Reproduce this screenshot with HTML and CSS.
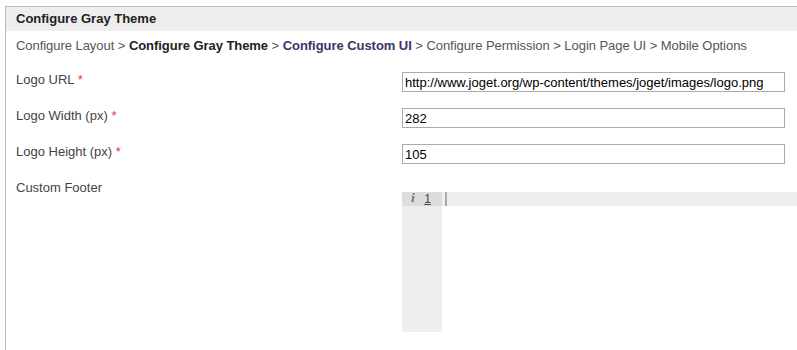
FILE: index.html
```html
<!DOCTYPE html>
<html lang="en">
<head>
  <meta charset="UTF-8">
  <title>Configure Gray Theme</title>
  <link rel="stylesheet" href="styles.css">
</head>
<body>
  <div class="panel">
    <div class="panel-title">Configure Gray Theme</div>

    <div class="steps">
      Configure Layout &gt; <span class="current">Configure Gray Theme</span> &gt;
      <span class="next">Configure Custom UI</span> &gt; Configure Permission &gt;
      Login Page UI &gt; Mobile Options
    </div>

    <div class="row">
      <label for="logoUrl">Logo URL <span class="req">*</span></label>
      <input type="text" id="logoUrl" value="http://www.joget.org/wp-content/themes/joget/images/logo.png">
    </div>

    <div class="row">
      <label for="logoWidth">Logo Width (px) <span class="req">*</span></label>
      <input type="text" id="logoWidth" value="282">
    </div>

    <div class="row">
      <label for="logoHeight">Logo Height (px) <span class="req">*</span></label>
      <input type="text" id="logoHeight" value="105">
    </div>

    <div class="row">
      <label>Custom Footer</label>
      <div class="editor">
        <div class="gutter">
          <div class="gutter-line"><span class="info">i</span><span class="num">1</span></div>
        </div>
        <div class="code">
          <div class="code-line"><span class="cursor"></span></div>
        </div>
      </div>
    </div>
  </div>
</body>
</html>
```

FILE: styles.css
```css
body {
  margin: 0;
  font-family: "Liberation Sans", Arial, sans-serif;
  font-size: 13px;
  color: #333;
  background: #fff;
  overflow: hidden;
}
.panel {
  margin: 6px 0 0 5px;
  border-top: 1px solid #bbb;
  border-left: 1px solid #bbb;
  height: 343px;
  overflow: hidden;
}
.panel-title {
  background: #eee;
  height: 24px;
  line-height: 24px;
  padding-left: 10px;
  font-weight: bold;
  color: #222;
}
.steps {
  padding: 7px 10px 0;
  line-height: 15px;
  color: #555;
  white-space: nowrap;
  letter-spacing: -0.05px;
}
.steps .current {
  font-weight: bold;
  color: #222;
}
.steps .next {
  font-weight: bold;
  color: #3b3466;
}
.row {
  display: flex;
  padding-left: 10px;
  margin-top: 17px;
}
.row + .row {
  margin-top: 14px;
}
.row label {
  width: 386px;
  flex: none;
  line-height: 15px;
  padding-top: 2px;
  color: #444;
}
.req {
  color: #e33;
}
.row input {
  width: 383px;
  height: 20px;
  box-sizing: border-box;
  border: 1px solid #aaa;
  padding: 0 2px;
  font-family: "Liberation Sans", Arial, sans-serif;
  font-size: 13px;
  color: #000;
  margin: 2px 0 0;
}
.editor {
  display: flex;
  width: 395px;
  height: 140px;
  margin-top: 14px;
  flex: none;
}
.gutter {
  width: 40px;
  background: #eee;
  flex: none;
}
.gutter-line {
  height: 14px;
  background: #ddd;
  font-size: 12px;
  line-height: 14px;
  display: flex;
  gap: 9px;
  padding-left: 9px;
}
.info {
  font-family: "DejaVu Serif", serif;
  font-style: italic;
  font-weight: bold;
  font-size: 11px;
  color: #777;
}
.num {
  color: #444;
  text-decoration: underline;
}
.code {
  flex: 1;
}
.code-line {
  height: 14px;
  background: #eee;
  padding-left: 3px;
}
.cursor {
  display: block;
  width: 2px;
  height: 14px;
  background: #aaa;
}
```
